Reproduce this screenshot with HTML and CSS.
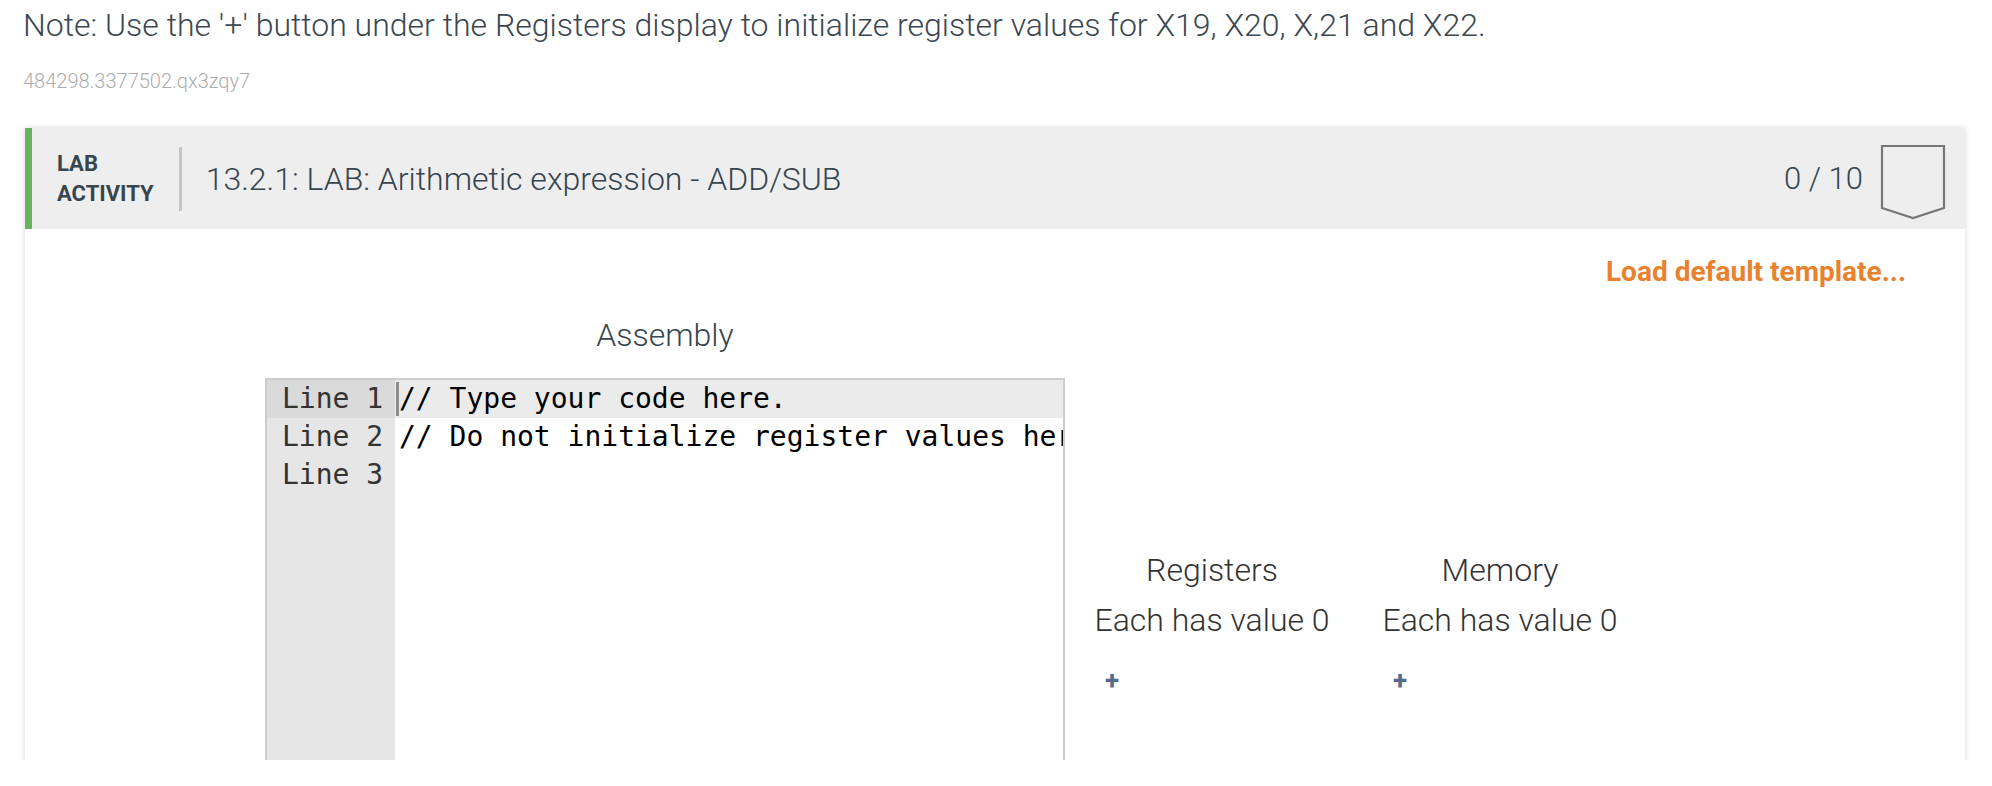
FILE: index.html
```html
<!DOCTYPE html>
<html lang="en">
<head>
<meta charset="utf-8">
<title>LAB: Arithmetic expression - ADD/SUB</title>
<link rel="stylesheet" href="styles.css">
</head>
<body>
<div class="viewport">
  <p class="note">Note: Use the '+' button under the Registers display to initialize register values for X19, X20, X,21 and X22.</p>
  <p class="ref-id">484298.3377502.qx3zqy7</p>

  <section class="card">
    <header class="card-header">
      <div class="activity-label">LAB<br>ACTIVITY</div>
      <div class="divider"></div>
      <h1 class="title">13.2.1: LAB: Arithmetic expression - ADD/SUB</h1>
      <div class="score">0 / 10</div>
      <svg class="badge" width="66" height="76" viewBox="0 0 66 76" aria-hidden="true">
        <path d="M2 2 H64 V64 L33 74 L2 64 Z" fill="none" stroke="#777" stroke-width="2.2" stroke-linejoin="miter"/>
      </svg>
    </header>

    <div class="card-body">
      <div class="template-row">
        <a class="template-link">Load default template...</a>
      </div>

      <div class="workspace">
        <div class="editor-col">
          <div class="editor-label">Assembly</div>
          <div class="editor">
            <div class="gutter">
              <div class="ln active">Line 1</div>
              <div class="ln">Line 2</div>
              <div class="ln">Line 3</div>
            </div>
            <div class="code">
              <div class="cl active"><span class="cursor"></span>// Type your code here.</div>
              <div class="cl">// Do not initialize register values here.</div>
              <div class="cl"></div>
            </div>
          </div>
        </div>

        <div class="state">
          <div class="state-col">
            <div class="state-title">Registers</div>
            <div class="state-value">Each has value 0</div>
            <button class="add-btn">+</button>
          </div>
          <div class="state-col">
            <div class="state-title">Memory</div>
            <div class="state-value">Each has value 0</div>
            <button class="add-btn">+</button>
          </div>
        </div>
      </div>
    </div>
  </section>
</div>
</body>
</html>
```

FILE: styles.css
```css
* { box-sizing: border-box; }

html, body {
  margin: 0;
  padding: 0;
  background: #ffffff;
}

body {
  font-family: Roboto, "Liberation Sans", Arial, sans-serif;
  color: #3b4852;
}

.viewport {
  height: 760px;
  overflow: hidden;
}

.note {
  margin: 0;
  padding: 6px 0 0 23px;
  font-size: 32px;
  font-weight: 300;
  line-height: 38px;
  color: #3b4852;
}

.ref-id {
  margin: 0;
  padding: 25px 0 0 23px;
  font-size: 20px;
  font-weight: 300;
  line-height: 24px;
  color: #adadad;
}

.card {
  margin: 35px 27px 0 25px;
  background: #fff;
  box-shadow: 0 0 6px rgba(0, 0, 0, 0.16);
  height: 700px;
}

.card-header {
  display: flex;
  align-items: center;
  height: 101px;
  background: #eeeeee;
  border-left: 7px solid #68b35b;
  padding-right: 19px;
}

.activity-label {
  padding-left: 25px;
  font-size: 22px;
  font-weight: 700;
  line-height: 30px;
  color: #37454f;
  text-transform: uppercase;
}

.divider {
  width: 3px;
  height: 64px;
  background: #c4c4c4;
  margin-left: 25px;
}

.title {
  margin: 0 0 0 24px;
  font-size: 32px;
  font-weight: 300;
  color: #37454f;
}

.score {
  margin-left: auto;
  font-size: 31px;
  font-weight: 300;
  color: #37454f;
}

.badge {
  display: block;
  margin-left: 17px;
  margin-top: 6px;
}

.card-body {
  padding-top: 27px;
}

.template-row {
  display: flex;
  justify-content: flex-end;
  padding-right: 59px;
}

.template-link {
  font-size: 28px;
  font-weight: 700;
  line-height: 32px;
  color: #e8822e;
  cursor: pointer;
}

.workspace {
  display: flex;
  align-items: flex-start;
  padding-left: 240px;
  margin-top: 28px;
}

.editor-col {
  width: 800px;
}

.editor-label {
  text-align: center;
  font-size: 32px;
  font-weight: 300;
  line-height: 38px;
  color: #37454f;
}

.editor {
  display: flex;
  margin-top: 24px;
  height: 480px;
  border: 2px solid #cdcdcd;
  overflow: hidden;
  font-family: "DejaVu Sans Mono", "Liberation Mono", monospace;
  font-size: 28px;
  line-height: 38px;
}

.gutter {
  width: 128px;
  flex: none;
  background: #e6e6e6;
  color: #333;
}

.ln {
  padding-left: 15px;
  white-space: pre;
}

.ln.active {
  background: #dadada;
}

.code {
  flex: 1;
  min-width: 0;
  color: #000;
}

.cl {
  position: relative;
  height: 38px;
  padding-left: 4px;
  white-space: pre;
}

.cl.active {
  background: #ebebeb;
}

.cursor {
  position: absolute;
  left: 1px;
  top: 2px;
  width: 3px;
  height: 34px;
  background: #8c8c8c;
}

.state {
  display: flex;
  margin-top: 235px;
  margin-left: 29px;
}

.state-col {
  width: 288px;
  display: flex;
  flex-direction: column;
  align-items: flex-start;
}

.state-title,
.state-value {
  width: 236px;
  text-align: center;
  font-size: 32px;
  font-weight: 300;
  line-height: 38px;
  color: #333;
}

.state-value {
  margin-top: 12px;
}

.add-btn {
  margin: 28px 0 0 5px;
  padding: 0 6px;
  border: none;
  background: none;
  font-family: Roboto, "Liberation Sans", sans-serif;
  font-size: 26px;
  font-weight: 700;
  line-height: 26px;
  color: #56698c;
  cursor: pointer;
}
```
